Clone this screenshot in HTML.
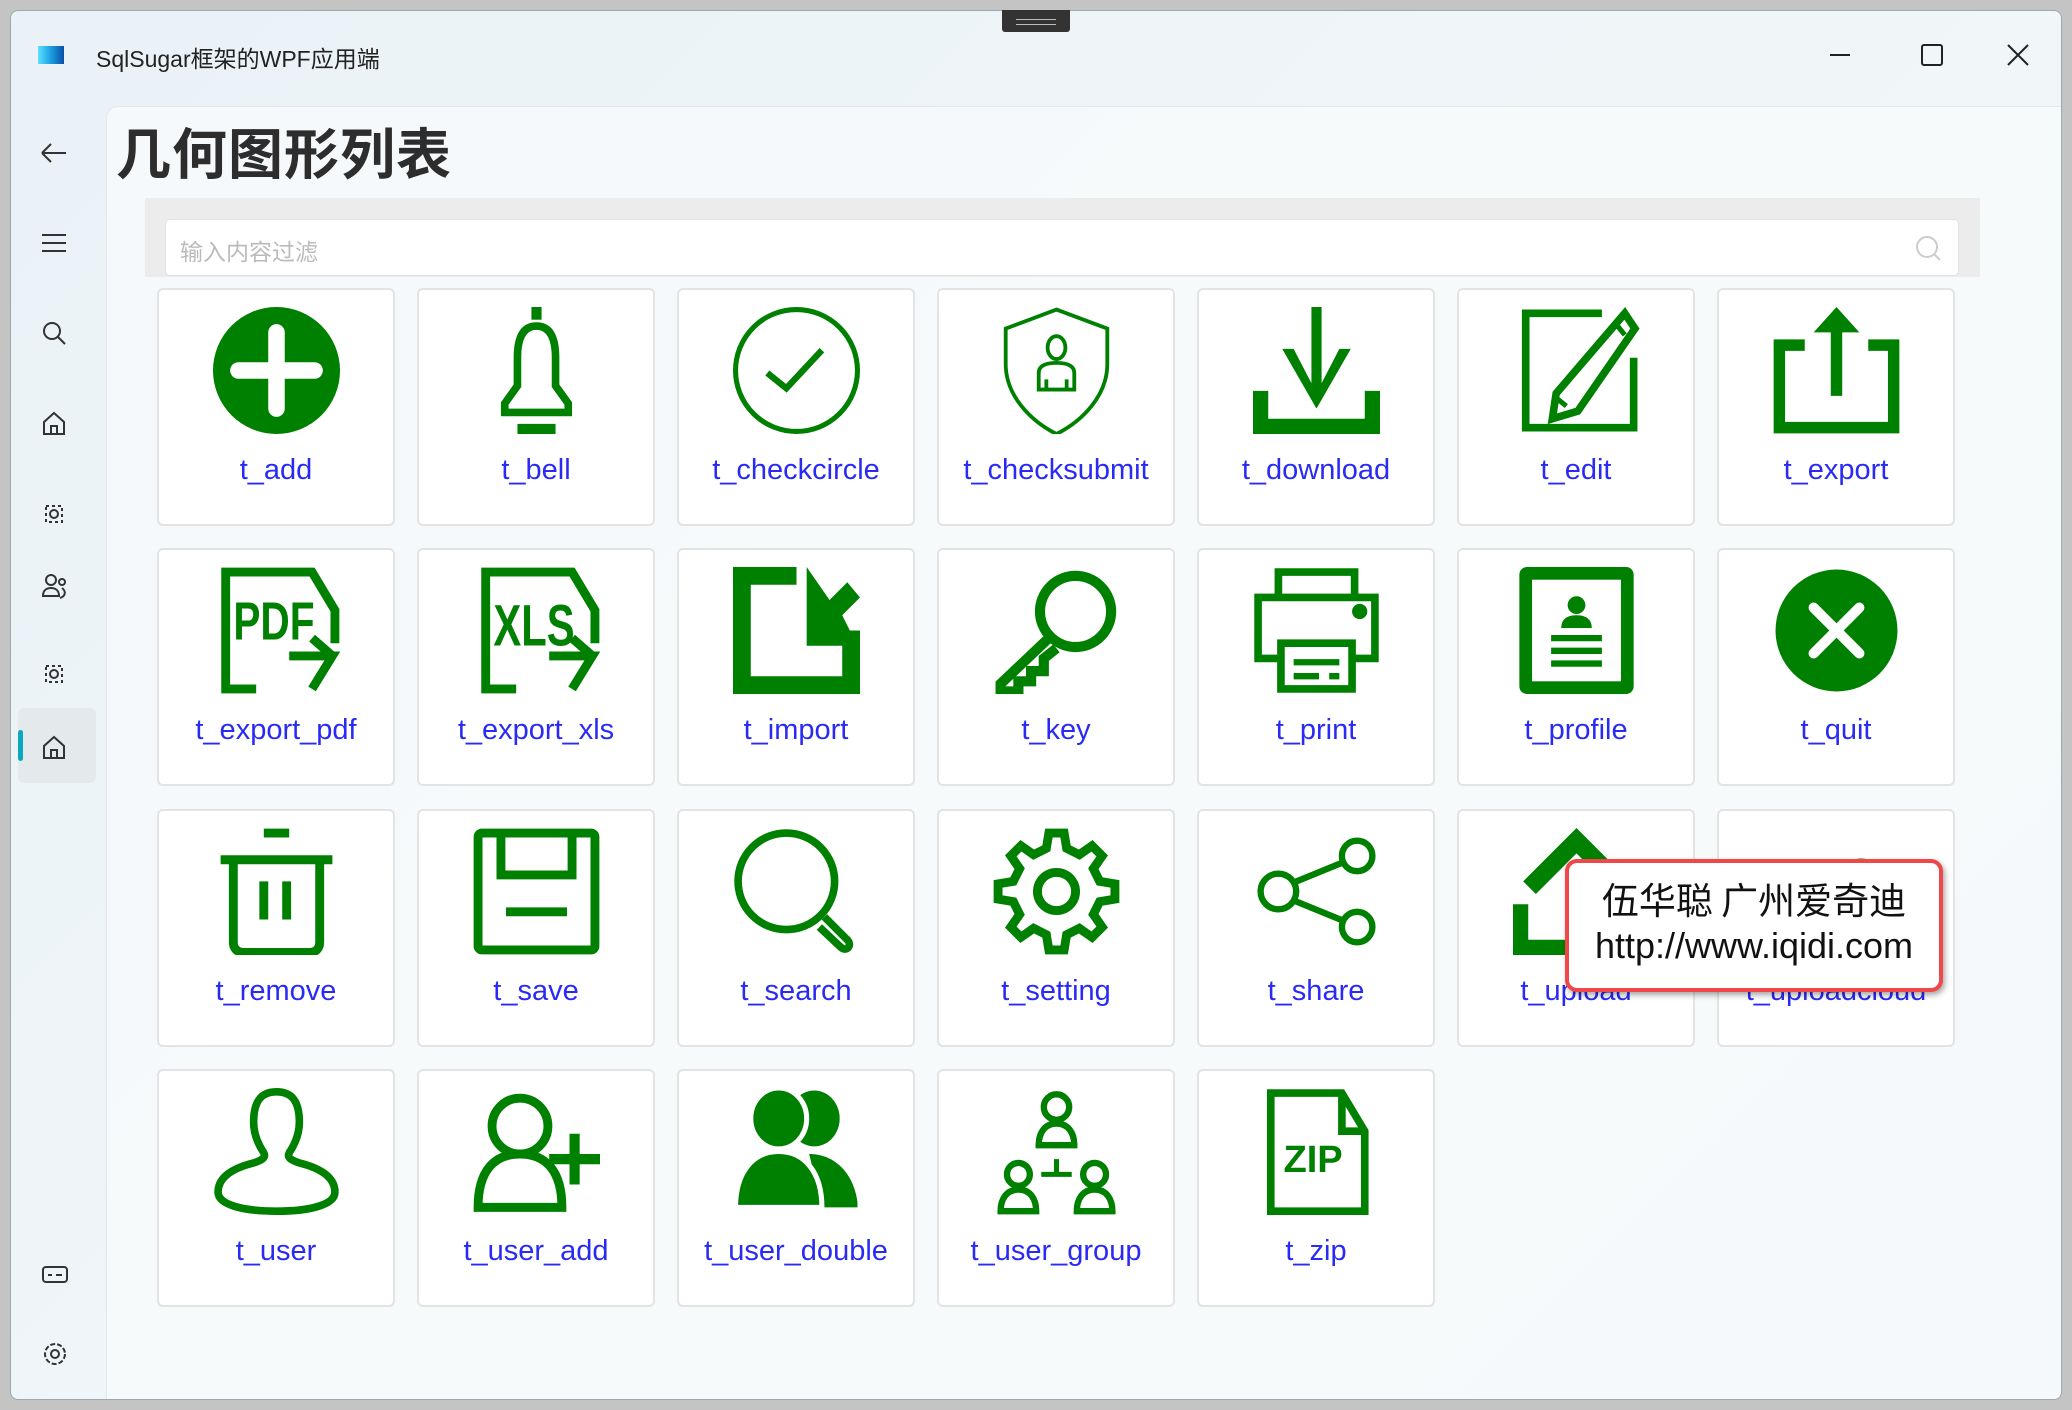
<!DOCTYPE html>
<html><head><meta charset="utf-8"><style>
*{margin:0;padding:0;box-sizing:border-box}
body{width:2072px;height:1410px;overflow:hidden;background:#c4c4c4;font-family:"Liberation Sans","Noto Sans CJK SC",sans-serif;position:relative}
.win{position:absolute;left:10px;top:10px;width:2052px;height:1390px;background:linear-gradient(135deg,#eaf2f7,#f1f6f8 60%,#eef3f5);border:1px solid #9aa;border-radius:8px;overflow:hidden}
.handle{position:absolute;left:1002px;top:10px;width:68px;height:22px;background:#333;border-radius:0 0 3px 3px}
.handle:after{content:"";position:absolute;left:14px;top:9px;width:40px;height:4px;border-top:1px solid #bbb;border-bottom:1px solid #bbb}
.ttl{position:absolute;left:96px;top:40px;font-size:23px;color:#222}
.logo{position:absolute;left:38px;top:46px;width:26px;height:18px;background:linear-gradient(90deg,#5de0ff,#1a9ee0 50%,#0b4fa8)}
.panel{position:absolute;left:95px;top:95px;width:1970px;height:1310px;background:rgba(248,251,252,.75);border:1px solid #dfe8ec;border-radius:12px}
h1{position:absolute;left:116px;top:110px;font-size:55px;font-weight:bold;color:#2d2d2d;font-family:"Noto Sans CJK SC",sans-serif;letter-spacing:1px}
.sbox{position:absolute;left:145px;top:198px;width:1835px;height:79px;background:#ececec}
.inp{position:absolute;left:165px;top:219px;width:1794px;height:57px;background:#fff;border:1px solid #e2e2e2;border-radius:5px;font-size:23px;color:#bbb;padding:13px 14px;font-family:"Noto Sans CJK SC",sans-serif}
.card{position:absolute;width:238px;height:238px;background:#fff;border:2px solid #e3e3e3;border-radius:6px}
.card svg{position:absolute;left:54px;top:17px;width:127px;height:127px}
.card span{position:absolute;left:0;right:0;top:164px;text-align:center;font-size:29px;color:#2a2af5}
.tip{position:absolute;left:1565px;top:859px;width:378px;height:133px;background:#fff;border:4px solid #f04848;border-radius:12px;box-shadow:2px 3px 6px rgba(0,0,0,.35);text-align:center;color:#111}
</style></head><body>
<div class="win">
<div class="panel"></div>
</div>
<div class="handle"></div>
<div class="logo"></div>
<div class="ttl">SqlSugar框架的WPF应用端</div>
<svg style="position:absolute;left:1828px;top:40px" width="210" height="30" fill="none" stroke="#222" stroke-width="2"><path d="M2 15h20"/><rect x="94" y="5" width="20" height="20" rx="2"/><path d="M180 5l20 20M200 5l-20 20"/></svg>
<div style="position:absolute;left:18px;top:708px;width:78px;height:75px;background:#e4e9ec;border-radius:6px"></div>
<div style="position:absolute;left:18px;top:730px;width:5px;height:31px;background:#0aa8c0;border-radius:3px"></div>
<svg style="position:absolute;left:38px;top:138px" width="32" height="1240" fill="none" stroke="#333" stroke-width="2">
<path d="M4 15h24M4 15l9-9M4 15l9 9"/>
<path d="M4 97h24M4 105h24M4 113h24"/>
<circle cx="14" cy="193" r="8"/><path d="M20 199l7 7"/>
<path d="M6 296v-12l10-9 10 9v12zM13 296v-8h6v8"/>
<rect x="8" y="368" width="16" height="16" stroke-dasharray="3 3"/><circle cx="16" cy="376" r="4"/>
<circle cx="13" cy="442" r="5"/><path d="M5 458c0-6 4-8 8-8s8 2 8 8z"/><circle cx="24" cy="444" r="3"/><path d="M24 450c4 3 4 8-2 10"/>
<rect x="8" y="528" width="16" height="16" stroke-dasharray="3 3"/><circle cx="16" cy="536" r="4"/>
<path d="M6 620v-12l10-9 10 9v12zM13 620v-8h6v8"/>
<rect x="5" y="1129" width="24" height="15" rx="3"/><path d="M10 1137h4M18 1137h6"/>
<circle cx="17" cy="1216" r="4"/><circle cx="17" cy="1216" r="10" stroke-dasharray="5 2"/>
</svg>
<h1>几何图形列表</h1>
<div class="sbox"></div>
<div class="inp">输入内容过滤</div>
<svg style="position:absolute;left:1914px;top:234px" width="30" height="30" fill="none" stroke="#ccc" stroke-width="2"><circle cx="13" cy="13" r="10"/><path d="M20 20l6 6"/></svg>

<div class="card" style="left:157px;top:288px"><svg viewBox="0 0 100 100"><circle cx="50" cy="50" r="50" fill="#008000"/><path d="M50 20v60M20 50h60" stroke="#fff" stroke-width="13" stroke-linecap="round"/></svg><span>t_add</span></div>
<div class="card" style="left:417px;top:288px"><svg viewBox="0 0 100 100" fill="none" stroke="#008000" stroke-width="6"><path d="M50 0v10" stroke-width="8"/><path d="M50 15c-12 0-15 12-15 25v22l-10 14v7h50v-7l-10-14V40c0-13-3-25-15-25z"/><path d="M35 96h30" stroke-width="8"/></svg><span>t_bell</span></div>
<div class="card" style="left:677px;top:288px"><svg viewBox="0 0 100 100" fill="none" stroke="#008000" stroke-width="4"><circle cx="50" cy="50" r="48"/><path d="M27 52l15 12 28-30" stroke-width="5"/></svg><span>t_checkcircle</span></div>
<div class="card" style="left:937px;top:288px"><svg viewBox="0 0 100 100" fill="none" stroke="#008000" stroke-width="3"><path d="M50 2l40 15v28c0 25-20 45-40 55C30 90 10 70 10 45V17z"/><ellipse cx="50" cy="32" rx="7" ry="9"/><path d="M36 65V52c0-6 6-8 14-8s14 2 14 8v13zM42 65v-8M58 65v-8"/></svg><span>t_checksubmit</span></div>
<div class="card" style="left:1197px;top:288px"><svg viewBox="0 0 100 100" fill="#008000"><path d="M46 0h8v60l14-27h9L50 80 23 33h9l14 27z"/><path d="M0 66h12v22h76V66h12v34H0z"/></svg><span>t_download</span></div>
<div class="card" style="left:1457px;top:288px"><svg viewBox="0 0 100 100" fill="none" stroke="#008000" stroke-width="6"><path d="M70 5H10v90h85V40"/><path d="M88 5l8 12-45 65-20 6 3-20z"/><path d="M80 12l8 10M32 70l10 8" stroke-width="4"/></svg><span>t_edit</span></div>
<div class="card" style="left:1717px;top:288px"><svg viewBox="0 0 100 100" fill="none" stroke="#008000" stroke-width="9"><path d="M25 30H5v65h90V30H75"/><path d="M50 70V15"/><path d="M50 0l18 20H32z" fill="#008000" stroke="none"/></svg><span>t_export</span></div>
<div class="card" style="left:157px;top:548px"><svg viewBox="0 0 100 100" fill="none" stroke="#008000" stroke-width="7"><path d="M34 96H10V4h68l18 30v26"/><path d="M60 70h34L78 96M78 56l16 14"/><text x="16" y="57" font-family="Liberation Sans Narrow,Liberation Sans,sans-serif" font-size="42" font-weight="bold" fill="#008000" stroke="none" textLength="64" lengthAdjust="spacingAndGlyphs">PDF</text></svg><span>t_export_pdf</span></div>
<div class="card" style="left:417px;top:548px"><svg viewBox="0 0 100 100" fill="none" stroke="#008000" stroke-width="7"><path d="M34 96H10V4h68l18 30v26"/><path d="M60 70h34L78 96M78 56l16 14"/><text x="16" y="62" font-family="Liberation Sans Narrow,Liberation Sans,sans-serif" font-size="46" font-weight="bold" fill="#008000" stroke="none" textLength="64" lengthAdjust="spacingAndGlyphs">XLS</text></svg><span>t_export_xls</span></div>
<div class="card" style="left:677px;top:548px"><svg viewBox="0 0 100 100" fill="#008000"><path d="M0 0h50v14H14v72h72V50h14v50H0z"/><path d="M58 0l18 26 14-14 10 12-14 14 12 24H58z"/></svg><span>t_import</span></div>
<div class="card" style="left:937px;top:548px"><svg viewBox="0 0 100 100" fill="none" stroke="#008000" stroke-width="8"><circle cx="65" cy="35" r="28"/><path d="M45 55L6 92l0 6h14v-8h10v-8h10v-10l10-8"/></svg><span>t_key</span></div>
<div class="card" style="left:1197px;top:548px"><svg viewBox="0 0 100 100" fill="none" stroke="#008000" stroke-width="6"><path d="M20 22V4h60v18"/><path d="M20 72H4V24h92v48H80"/><rect x="22" y="60" width="56" height="36"/><path d="M32 75h36M32 86h20M60 86h8" stroke-width="5"/><circle cx="84" cy="35" r="3" fill="#008000"/></svg><span>t_print</span></div>
<div class="card" style="left:1457px;top:548px"><svg viewBox="0 0 100 100"><rect x="5" y="0" width="90" height="100" rx="6" fill="#008000"/><rect x="15" y="10" width="70" height="80" fill="#fff"/><circle cx="50" cy="30" r="7" fill="#008000"/><path d="M38 48c0-8 6-10 12-10s12 2 12 10z" fill="#008000"/><path d="M30 56h40M30 66h40M30 76h40" stroke="#008000" stroke-width="5"/></svg><span>t_profile</span></div>
<div class="card" style="left:1717px;top:548px"><svg viewBox="0 0 100 100"><circle cx="50" cy="50" r="48" fill="#008000"/><path d="M32 32l36 36M68 32L32 68" stroke="#fff" stroke-width="8" stroke-linecap="round"/></svg><span>t_quit</span></div>
<div class="card" style="left:157px;top:809px"><svg viewBox="0 0 100 100" fill="none" stroke="#008000" stroke-width="7"><path d="M40 4h20M6 25h88"/><path d="M16 25v65c0 5 3 8 8 8h52c5 0 8-3 8-8V25"/><path d="M40 42v30M58 42v30"/></svg><span>t_remove</span></div>
<div class="card" style="left:417px;top:809px"><svg viewBox="0 0 100 100" fill="none" stroke="#008000" stroke-width="7"><rect x="4" y="4" width="92" height="92" rx="3"/><path d="M22 4v33h56V4"/><path d="M26 66h48"/></svg><span>t_save</span></div>
<div class="card" style="left:677px;top:809px"><svg viewBox="0 0 100 100" fill="none" stroke="#008000" stroke-width="6"><circle cx="42" cy="42" r="38"/><path d="M72 70l18 18c4 4 0 10-5 6L68 78" stroke-width="6"/></svg><span>t_search</span></div>
<div class="card" style="left:937px;top:809px"><svg viewBox="0 0 100 100" fill="none" stroke="#008000" stroke-width="7"><path d="M44 4h12l2 12 10 5 10-7 8 8-7 10 5 10 12 2v12l-12 2-5 10 7 10-8 8-10-7-10 5-2 12H44l-2-12-10-5-10 7-8-8 7-10-5-10-12-2V44l12-2 5-10-7-10 8-8 10 7 10-5z"/><circle cx="50" cy="50" r="15"/></svg><span>t_setting</span></div>
<div class="card" style="left:1197px;top:809px"><svg viewBox="0 0 100 100" fill="none" stroke="#008000" stroke-width="5"><circle cx="20" cy="50" r="14"/><circle cx="82" cy="22" r="12"/><circle cx="82" cy="78" r="12"/><path d="M32 43l39-16M32 57l39 16"/></svg><span>t_share</span></div>
<div class="card" style="left:1457px;top:809px"><svg viewBox="0 0 100 100" fill="#008000"><path d="M50 0l42 42-10 10-32-32-32 32-10-10z"/><path d="M0 60h12v28h30v12H0z"/></svg><span>t_upload</span></div>
<div class="card" style="left:1717px;top:809px"><svg viewBox="0 0 100 100" fill="none" stroke="#008000" stroke-width="6"><path d="M20 80C5 80 5 55 22 52c0-20 20-30 35-20 10-10 30-5 30 15 15 0 15 33 0 33z"/></svg><span>t_uploadcloud</span></div>
<div class="card" style="left:157px;top:1069px"><svg viewBox="0 0 100 100" fill="none" stroke="#008000" stroke-width="6"><path d="M50 3c-14 0-18 10-18 24 0 10 4 18 8 24 2 4-2 6-8 8C12 64 4 72 4 82c0 10 20 15 46 15s46-5 46-15c0-10-8-18-28-23-6-2-10-4-8-8 4-6 8-14 8-24 0-14-4-24-18-24z"/></svg><span>t_user</span></div>
<div class="card" style="left:417px;top:1069px"><svg viewBox="0 0 100 100" fill="none" stroke="#008000" stroke-width="7"><circle cx="37" cy="30" r="22"/><path d="M4 94c0-28 12-42 33-42s33 14 33 42z"/><path d="M80 36v40M60 56h40" stroke-width="8"/></svg><span>t_user_add</span></div>
<div class="card" style="left:677px;top:1069px"><svg viewBox="0 0 100 100" fill="#008000"><ellipse cx="64" cy="24" rx="20" ry="22"/><ellipse cx="36" cy="24" rx="22" ry="24" stroke="#fff" stroke-width="4"/><path d="M60 52c20 0 35 15 38 38v4H70z"/><path d="M2 94c0-28 14-44 34-44s34 16 34 44z" stroke="#fff" stroke-width="4"/></svg><span>t_user_double</span></div>
<div class="card" style="left:937px;top:1069px"><svg viewBox="0 0 100 100" fill="none" stroke="#008000" stroke-width="5"><circle cx="50" cy="15" r="10"/><path d="M36 45c0-10 5-17 14-17s14 7 14 17z"/><circle cx="20" cy="68" r="9"/><path d="M6 97c0-10 5-17 14-17s14 7 14 17z"/><circle cx="80" cy="68" r="9"/><path d="M66 97c0-10 5-17 14-17s14 7 14 17z"/><path d="M50 56v12M38 68h24" stroke-width="4"/></svg><span>t_user_group</span></div>
<div class="card" style="left:1197px;top:1069px"><svg viewBox="0 0 100 100" fill="none" stroke="#008000" stroke-width="6"><path d="M14 4h56l18 30v63H14z"/><path d="M70 4v30h18" fill="none"/><text x="24" y="66" font-family="Liberation Sans,sans-serif" font-size="30" font-weight="bold" fill="#008000" stroke="none">ZIP</text></svg><span>t_zip</span></div>

<div class="tip"><div style="font-family:'Noto Sans CJK SC',sans-serif;font-size:37px;margin-top:12px;line-height:46px">伍华聪 广州爱奇迪</div><div style="font-size:36px;margin-top:4px">http://www.iqidi.com</div></div>
</body></html>
